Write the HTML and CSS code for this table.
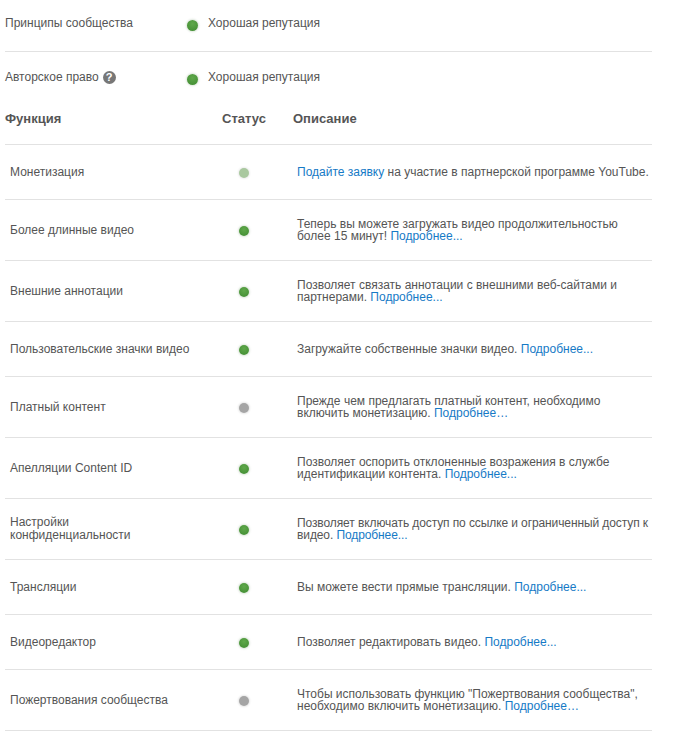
FILE: index.html
```html
<!DOCTYPE html>
<html lang="ru">
<head>
<meta charset="utf-8">
<link rel="stylesheet" href="styles.css">
</head>
<body>
<div class="page">
  <div class="standing standing-first">
    <div class="standing-label">Принципы сообщества</div>
    <div class="standing-value"><span class="dot dot-green"></span>Хорошая репутация</div>
  </div>
  <div class="standing">
    <div class="standing-label">Авторское право <span class="help">?</span></div>
    <div class="standing-value"><span class="dot dot-green"></span>Хорошая репутация</div>
  </div>
  <table class="features">
    <colgroup><col class="c1"><col class="c2"><col class="c3"></colgroup>
    <thead>
      <tr><th class="h1">Функция</th><th class="h2">Статус</th><th class="h3">Описание</th></tr>
    </thead>
    <tbody>
      <tr><td class="name">Монетизация</td><td class="stat"><span class="dot dot-light"></span></td><td class="desc"><a href="#">Подайте заявку</a> на участие в партнерской программе YouTube.</td></tr>
      <tr><td class="name">Более длинные видео</td><td class="stat"><span class="dot dot-green"></span></td><td class="desc">Теперь вы можете загружать видео продолжительностью более 15 минут! <a href="#">Подробнее...</a></td></tr>
      <tr><td class="name">Внешние аннотации</td><td class="stat"><span class="dot dot-green"></span></td><td class="desc">Позволяет связать аннотации с внешними веб-сайтами и партнерами. <a href="#">Подробнее...</a></td></tr>
      <tr><td class="name">Пользовательские значки видео</td><td class="stat"><span class="dot dot-green"></span></td><td class="desc">Загружайте собственные значки видео. <a href="#">Подробнее...</a></td></tr>
      <tr><td class="name">Платный контент</td><td class="stat"><span class="dot dot-grey"></span></td><td class="desc">Прежде чем предлагать платный контент, необходимо включить монетизацию. <a href="#">Подробнее…</a></td></tr>
      <tr><td class="name">Апелляции Content ID</td><td class="stat"><span class="dot dot-green"></span></td><td class="desc">Позволяет оспорить отклоненные возражения в службе идентификации контента. <a href="#">Подробнее...</a></td></tr>
      <tr><td class="name">Настройки<br>конфиденциальности</td><td class="stat"><span class="dot dot-green"></span></td><td class="desc desc-tight">Позволяет включать доступ по ссылке и ограниченный доступ к видео. <a href="#">Подробнее...</a></td></tr>
      <tr><td class="name">Трансляции</td><td class="stat"><span class="dot dot-green"></span></td><td class="desc">Вы можете вести прямые трансляции. <a href="#">Подробнее...</a></td></tr>
      <tr><td class="name">Видеоредактор</td><td class="stat"><span class="dot dot-green"></span></td><td class="desc">Позволяет редактировать видео. <a href="#">Подробнее...</a></td></tr>
      <tr><td class="name">Пожертвования сообщества</td><td class="stat"><span class="dot dot-grey"></span></td><td class="desc">Чтобы использовать функцию "Пожертвования сообщества", необходимо включить монетизацию. <a href="#">Подробнее…</a></td></tr>
    </tbody>
  </table>
</div>
</body>
</html>
```
FILE: styles.css
```css
html, body {
  margin: 0;
  padding: 0;
  background: #fff;
}
body {
  font-family: "Liberation Sans", Arial, sans-serif;
  color: #555;
}
.page {
  width: 647px;
  padding-left: 5px;
}
.standing {
  display: flex;
  align-items: center;
  font-size: 12px;
  line-height: 16px;
  padding: 17px 0 21px;
  color: #555;
}
.standing-first {
  padding: 15px 0 20px;
  border-bottom: 1px solid #e2e2e2;
}
.standing-label {
  width: 182px;
  display: flex;
  align-items: center;
}
.standing-value {
  display: flex;
  align-items: center;
}
.standing-value .dot {
  width: 11px;
  height: 11px;
  margin-right: 10px;
  position: relative;
  top: 2px;
}
.help {
  display: inline-block;
  width: 13px;
  height: 13px;
  border-radius: 50%;
  background: #777;
  color: #fff;
  font-size: 11px;
  font-weight: bold;
  line-height: 13px;
  text-align: center;
  margin-left: 4px;
}
.dot {
  display: inline-block;
  width: 10px;
  height: 10px;
  border-radius: 50%;
  vertical-align: middle;
}
.dot-green {
  background: radial-gradient(circle at 50% 35%, #5fa84a 0%, #3f8a31 100%);
  box-shadow: 0 0 2px 1px rgba(60, 110, 50, 0.18);
}
.dot-light {
  background: #a9c89f;
  box-shadow: 0 0 2px 1px rgba(0, 0, 0, 0.08);
}
.dot-grey {
  background: #a5a5a5;
  box-shadow: 0 0 2px 1px rgba(0, 0, 0, 0.1);
}
.features {
  width: 647px;
  border-collapse: collapse;
  table-layout: fixed;
}
.c1 { width: 213px; }
.c2 { width: 52px; }
.features th {
  font-size: 13px;
  font-weight: bold;
  color: #555;
  text-align: left;
  padding: 5px 0 17px;
  line-height: 16px;
  border-bottom: 1px solid #e2e2e2;
}
.features th.h2 {
  text-align: center;
}
.features th.h3 {
  padding-left: 23px;
}
.features td {
  box-sizing: border-box;
  border-bottom: 1px solid #e2e2e2;
  vertical-align: middle;
  height: 55px;
  padding: 0;
  font-size: 12px;
  line-height: 12px;
}
.features td.name {
  padding-left: 5px;
  color: #555;
  line-height: 13px;
}
.features td.stat {
  text-align: center;
}
.features td.desc {
  padding: 18px 0 18px 27px;
  color: #555;
}
.features td.desc-tight {
  letter-spacing: -0.1px;
}
.desc a {
  color: #167ac6;
  text-decoration: none;
}
```
